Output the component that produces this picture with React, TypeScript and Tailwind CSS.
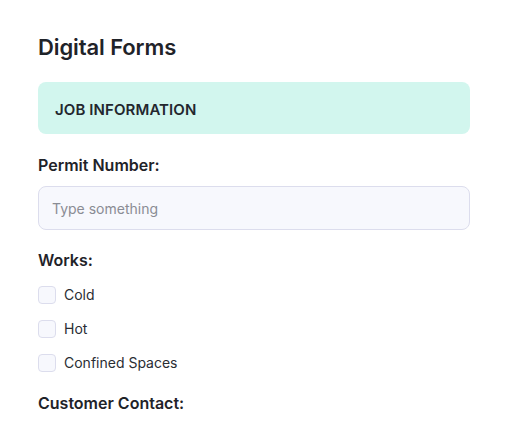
export default function App() {
  const works = ['Cold', 'Hot', 'Confined Spaces'];
  return (
    <div className="min-h-screen bg-white font-['Inter',sans-serif] text-[#1f2329]">
      <div className="ml-[38px] w-[432px] pt-[33px]">
        <h1 className="text-[22px] font-semibold leading-[28px] tracking-[-0.1px]">Digital Forms</h1>
        <div className="mt-[21px] flex h-[52px] items-center rounded-lg bg-[#d2f6ee] px-[17px] pt-[5px]">
          <span className="text-[15px] font-semibold tracking-[0.1px] text-[#23272e]">JOB INFORMATION</span>
        </div>
        <label className="mt-[21px] block text-[16px] font-semibold leading-[20px]">Permit Number:</label>
        <input
          type="text"
          placeholder="Type something"
          className="mt-[11px] block h-[44px] w-full rounded-lg border border-[#dcdded] bg-[#f7f8fd] px-[13px] text-[14px] outline-none placeholder:text-[#8a8c94]"
        />
        <div className="mt-[20px] text-[16px] font-semibold leading-[20px]">Works:</div>
        <div className="mt-[16px] flex flex-col gap-[16px]">
          {works.map((w) => (
            <label key={w} className="flex items-center gap-[8px]">
              <span className="h-[18px] w-[18px] rounded-[4px] border border-[#dcdded] bg-[#f7f8fd]" />
              <span className="text-[14px] leading-[18px] text-[#2a2d33]">{w}</span>
            </label>
          ))}
        </div>
        <div className="mt-[21px] text-[16px] font-semibold leading-[20px]">Customer Contact:</div>
      </div>
    </div>
  );
}
